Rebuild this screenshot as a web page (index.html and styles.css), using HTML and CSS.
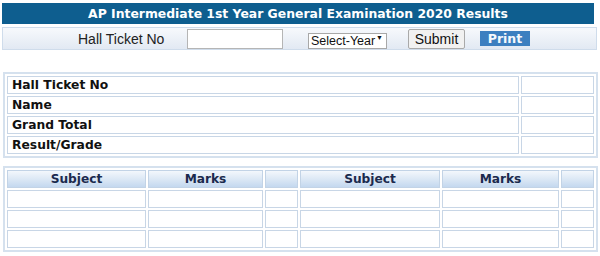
FILE: index.html
```html
<!DOCTYPE html>
<html lang="en">
  <head>
    <meta charset="UTF-8" />
    <meta name="viewport" content="width=device-width, initial-scale=1.0" />
    <title>AP Intermediate Results</title>
    <link rel="stylesheet" href="styles.css">
  </head>
  <body>
    <div class="page">
      <div class="title-bar">AP Intermediate 1st Year General Examination 2020 Results</div>

      <div class="search-bar">
        <label for="htno" class="search-label">Hall Ticket No</label>
        <input id="htno" type="text" class="ht-input" autocomplete="off" />
        <div class="select-wrap">
          <select class="year-select">
            <option>Select-Year</option>
          </select>
          <span class="select-arrow">▼</span>
        </div>
        <button class="submit-button">Submit</button>
        <button class="print-button">Print</button>
      </div>

      <table class="info-table">
        <tr><td class="info-label">Hall Ticket No</td><td class="info-value"></td></tr>
        <tr><td class="info-label">Name</td><td class="info-value"></td></tr>
        <tr><td class="info-label">Grand Total</td><td class="info-value"></td></tr>
        <tr><td class="info-label">Result/Grade</td><td class="info-value"></td></tr>
      </table>

      <table class="marks-table">
        <tr>
          <th class="col-subject">Subject</th>
          <th class="col-marks">Marks</th>
          <th class="col-extra"></th>
          <th class="col-subject2">Subject</th>
          <th class="col-marks2">Marks</th>
          <th></th>
        </tr>
        <tr><td></td><td></td><td></td><td></td><td></td><td></td></tr>
        <tr><td></td><td></td><td></td><td></td><td></td><td></td></tr>
        <tr><td></td><td></td><td></td><td></td><td></td><td></td></tr>
      </table>
    </div>
  </body>
</html>
```

FILE: styles.css
```css
* {
  margin: 0;
  padding: 0;
  box-sizing: border-box;
}

body {
  font-family: "DejaVu Sans", Verdana, sans-serif;
  background: #ffffff;
  color: #111111;
  width: 600px;
  height: 256px;
  overflow: hidden;
}

.page {
  padding: 3px 3px 0 2px;
}

.title-bar {
  height: 21px;
  margin-right: 3px;
  background: #0e5e8f;
  color: #ffffff;
  font-weight: bold;
  font-size: 12.4px;
  line-height: 21px;
  text-align: center;
}

.search-bar {
  display: flex;
  align-items: center;
  height: 23px;
  margin-top: 3px;
  border: 1px solid #cfdceb;
  background: linear-gradient(to bottom, #f7f9fc, #e2e9f3);
  font-family: "Liberation Sans", Arial, sans-serif;
}

.search-label {
  margin-left: 75px;
  font-size: 14px;
  color: #222222;
  width: 109px;
}

.ht-input {
  width: 96px;
  height: 20px;
  border: 1px solid #b5b5b5;
  background: #ffffff;
}

.select-wrap {
  position: relative;
  margin-left: 25px;
  width: 79px;
  height: 16px;
}

.year-select {
  appearance: none;
  -webkit-appearance: none;
  width: 79px;
  height: 16px;
  padding-left: 2px;
  font-family: "Liberation Sans", Arial, sans-serif;
  font-size: 12.5px;
  line-height: 14px;
  border: 1px solid #a8a8a8;
  border-radius: 0;
  background: #ffffff;
  color: #111111;
}

.select-arrow {
  position: absolute;
  right: 4px;
  top: 3px;
  font-size: 7px;
  color: #111111;
  pointer-events: none;
}

.submit-button {
  margin-left: 21px;
  width: 57px;
  height: 20px;
  font-family: "Liberation Sans", Arial, sans-serif;
  font-size: 14px;
  color: #111111;
  background: #f1f1f1;
  border: 1px solid #a9a9a9;
  border-radius: 2px;
}

.print-button {
  margin-left: 15px;
  width: 50px;
  height: 15px;
  background: #3c7fc0;
  color: #f4f8fc;
  border: none;
  font-family: "DejaVu Sans", Verdana, sans-serif;
  font-weight: bold;
  font-size: 12.5px;
  line-height: 15px;
}

.info-table,
.marks-table {
  width: 595px;
  border: 2px solid #d5e1ee;
  border-spacing: 2px;
  margin-left: 1px;
}

.info-table {
  margin-top: 22px;
}

.marks-table {
  margin-top: 8px;
  table-layout: fixed;
}

.info-table td {
  height: 18px;
  line-height: 16px;
  border: 1px solid #c8d6e6;
  background: #ffffff;
}

.info-label {
  width: 512px;
  padding-left: 4px;
  font-weight: bold;
  font-size: 12.3px;
  color: #111111;
}

.marks-table th {
  height: 18px;
  line-height: 16px;
  border: 1px solid #c2d3e6;
  background: linear-gradient(to bottom, #f3f7fc 0%, #dce8f5 50%, #c4d8ef 100%);
  color: #1b2a4e;
  font-weight: bold;
  font-size: 12.2px;
}

.marks-table td {
  height: 18px;
  border: 1px solid #c8d6e6;
  background: #ffffff;
}

.col-subject {
  width: 139px;
}

.col-marks {
  width: 115px;
}

.col-extra {
  width: 33px;
}

.col-subject2 {
  width: 140px;
}

.col-marks2 {
  width: 117px;
}
```
